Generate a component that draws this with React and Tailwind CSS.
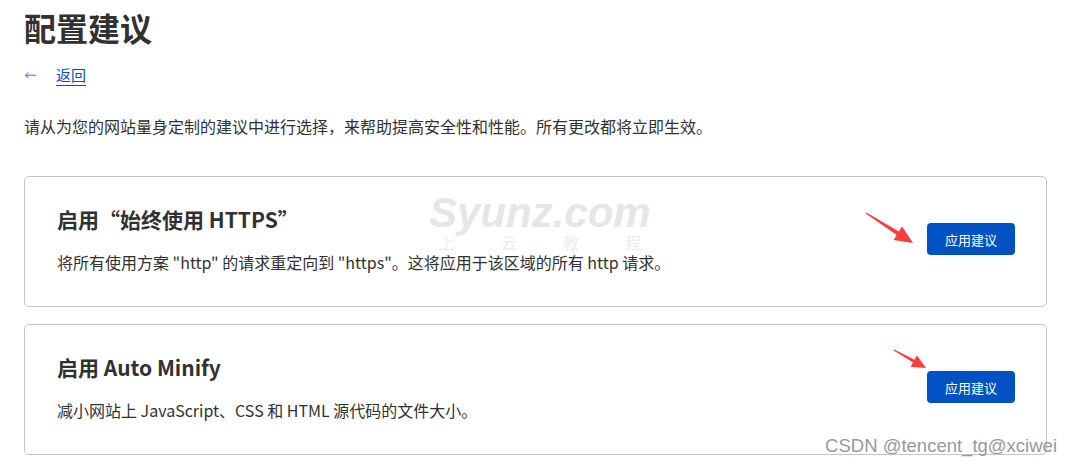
const font = { fontFamily: '"Noto Sans CJK SC", "Noto Sans", sans-serif' };

function Arrow({ big }) {
  // red screenshot-annotation arrow
  if (big) {
    return (
      <svg className="absolute left-[836px] top-[31px] pointer-events-none" width="60" height="42" viewBox="-5 -5 60 42">
        <polygon points="-0.3,0.4 30.7,22 27.5,27 47,30 36.1,13.6 32.9,18.6 0.3,-0.4" fill="#ff3b3b" />
      </svg>
    );
  }
  return (
    <svg className="absolute left-[864px] top-[20px] pointer-events-none" width="44" height="30" viewBox="-5 -5 44 30">
      <polygon points="-0.3,0.4 19.1,12.4 16.6,16.8 32,18 23,5.4 20.5,9.8 0.3,-0.4" fill="#ff3b3b" />
    </svg>
  );
}

function Card({ title, desc, bigArrow, children }) {
  return (
    <div className="relative border border-[#c4c4c4] rounded-[5px] bg-white pl-8 pr-[31px] pt-[28px] pb-[33px] flex items-center justify-between">
      {children}
      <div className="relative flex flex-col gap-[18px]">
        <h2 className="text-[21px] leading-[28px] font-bold text-[#313131]">{title}</h2>
        <p className="text-[16px] leading-[22px] text-[#313131]">{desc}</p>
      </div>
      <Arrow big={bigArrow} />
      <button className="relative h-8 w-[88px] rounded-[4px] bg-[#0051c3] text-white text-[13px] leading-none">
        应用建议
      </button>
    </div>
  );
}

export default function App() {
  return (
    <div className="relative min-h-[466px] bg-white px-6 pt-[5px] overflow-hidden" style={font}>
      <h1 className="text-[32px] leading-[44px] font-bold text-[#313131]">配置建议</h1>

      <div className="flex items-center mt-[14px] h-6">
        <span className="text-[#6b96dc] text-[15px] w-8" style={{ fontFamily: '"DejaVu Sans", sans-serif' }}>←</span>
        <a href="#" className="text-[15px] text-[#0051c3] underline underline-offset-[4px] decoration-[#0051c3]">返回</a>
      </div>

      <p className="mt-[27px] text-[16px] leading-[24px] text-[#313131]">
        请从为您的网站量身定制的建议中进行选择，来帮助提高安全性和性能。所有更改都将立即生效。
      </p>

      <div className="mt-[38px] flex flex-col gap-[17px]">
        <Card
          bigArrow
          title={'启用\u201C始终使用 HTTPS\u201D'}
          desc={'将所有使用方案 "http" 的请求重定向到 "https"。这将应用于该区域的所有 http 请求。'}
        >
          {/* watermark */}
          <div className="absolute left-[404px] top-[14px] pointer-events-none select-none">
            <div className="text-[42px] leading-[44px] font-bold italic text-[#e6e6e6]" style={{ fontFamily: '"Liberation Sans", Arial, sans-serif' }}>
              Syunz.com
            </div>
            <div className="flex gap-[46px] pl-[10px] text-[16px] leading-[14px] text-[#ececec]">
              <span>上</span><span>云</span><span>教</span><span>程</span>
            </div>
          </div>
        </Card>
        <Card
          title="启用 Auto Minify"
          desc="减小网站上 JavaScript、CSS 和 HTML 源代码的文件大小。"
        />
      </div>

      <div className="absolute right-[14px] bottom-[9px] text-[18.5px] leading-[22px] text-[#999999]" style={{ fontFamily: '"Liberation Sans", Arial, sans-serif' }}>
        CSDN @tencent_tg@xciwei
      </div>
    </div>
  );
}
